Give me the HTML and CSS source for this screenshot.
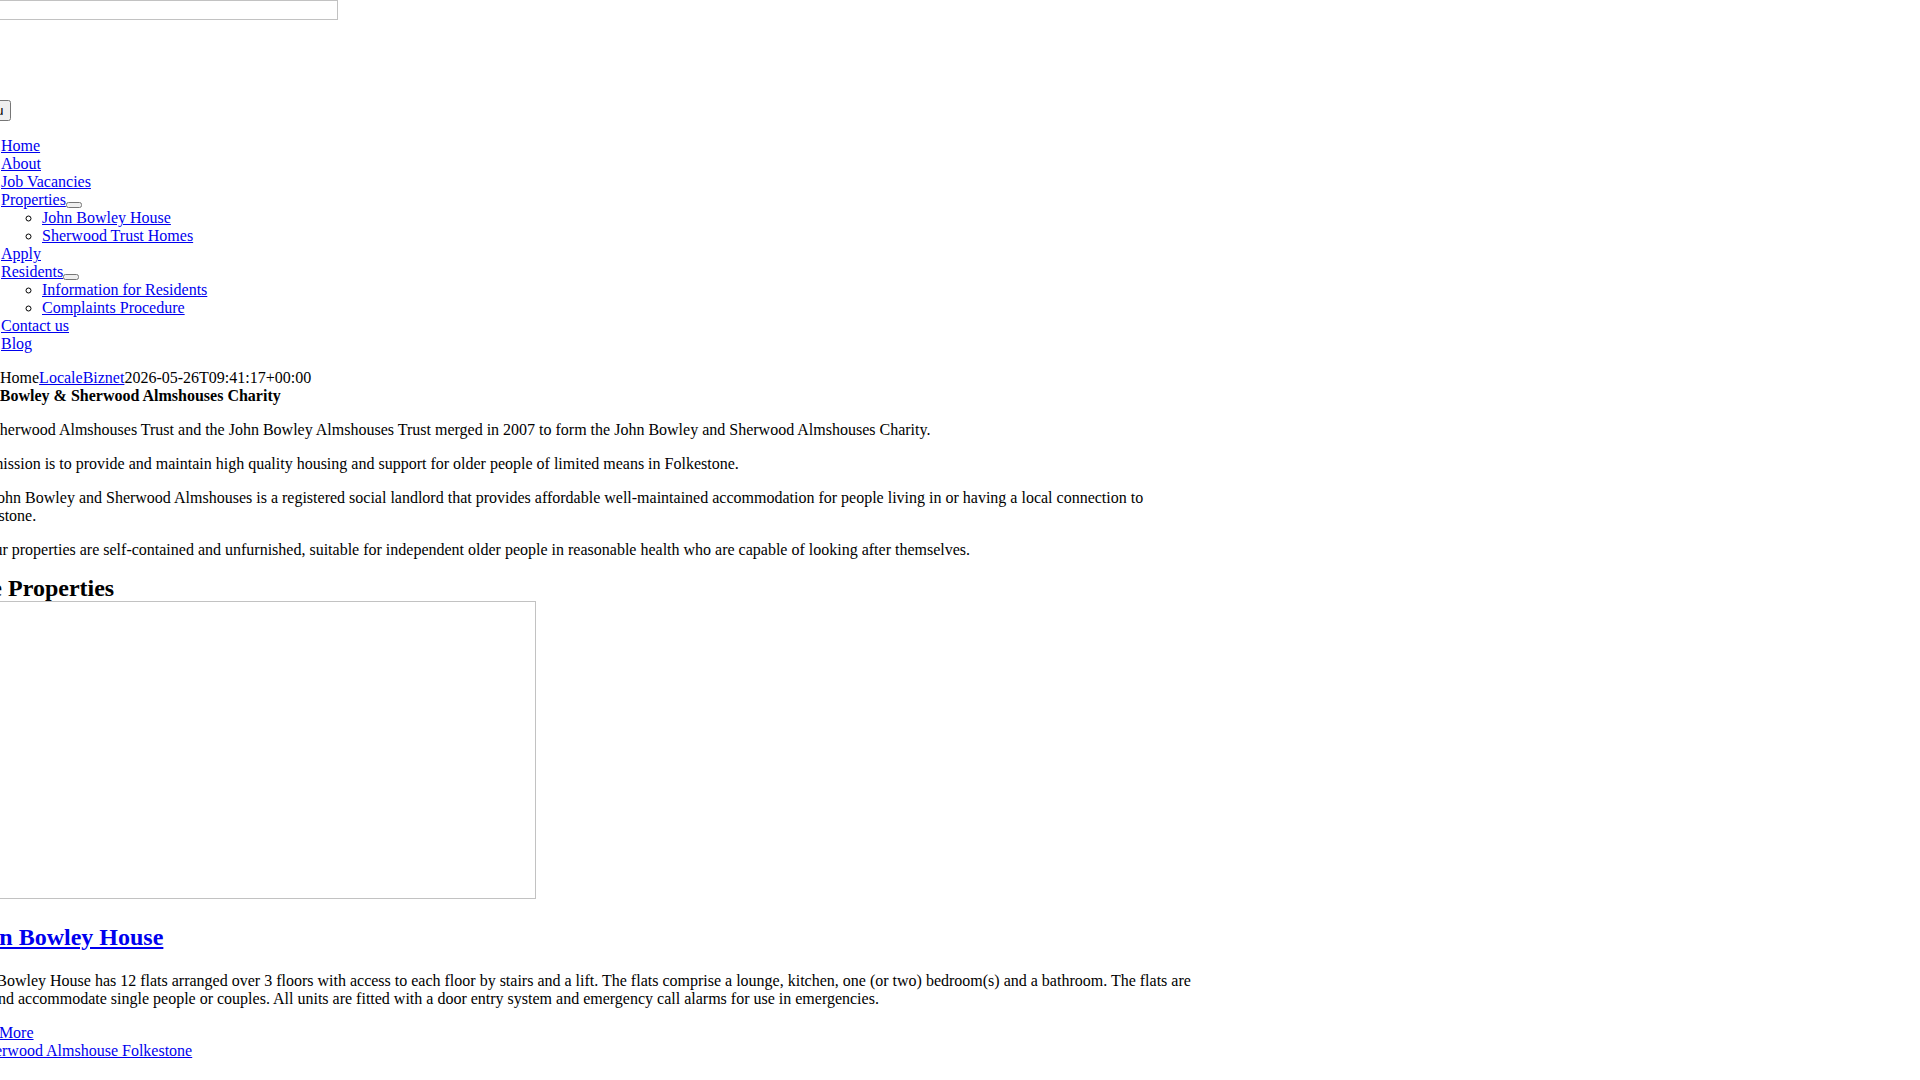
FILE: index.html
```html
<!DOCTYPE html>
<html lang="en">
<head>
<meta charset="utf-8">
<title>John Bowley &amp; Sherwood Almshouses Charity</title>
<link rel="stylesheet" href="styles.css">
</head>
<body>
<header class="site-header">
  <form class="search-form"><input class="search-field" type="text" aria-label="Search"></form>
  <button class="menu-toggle" type="button">Menu</button>
</header>
<nav class="main-nav">
  <ul class="menu">
    <li><a href="#">Home</a></li>
    <li><a href="#">About</a></li>
    <li><a href="#">Job Vacancies</a></li>
    <li><a href="#">Properties</a><button class="sub-toggle" type="button"></button>
      <ul class="sub-menu">
        <li><a href="#">John Bowley House</a></li>
        <li><a href="#">Sherwood Trust Homes</a></li>
      </ul>
    </li>
    <li><a href="#">Apply</a></li>
    <li><a href="#">Residents</a><button class="sub-toggle" type="button"></button>
      <ul class="sub-menu">
        <li><a href="#">Information for Residents</a></li>
        <li><a href="#">Complaints Procedure</a></li>
      </ul>
    </li>
    <li><a href="#">Contact us</a></li>
    <li><a href="#">Blog</a></li>
  </ul>
</nav>
<div class="breadcrumbs">Home<a href="#">LocaleBiznet</a>2026-05-26T09:41:17+00:00</div>
<main class="content">
  <h1 class="page-title">John Bowley &amp; Sherwood Almshouses Charity</h1>
  <p>The Sherwood Almshouses Trust and the John Bowley Almshouses Trust merged in 2007 to form the John Bowley and Sherwood Almshouses Charity.</p>
  <p>Our mission is to provide and maintain high quality housing and support for older people of limited means in Folkestone.</p>
  <p>The John Bowley and Sherwood Almshouses is a registered social landlord that provides affordable well-maintained accommodation for people living in or having a local connection to Folkestone.</p>
  <p>All our properties are self-contained and unfurnished, suitable for independent older people in reasonable health who are capable of looking after themselves.</p>
  <h2 class="section-title">The Properties</h2>
  <div class="map-frame"></div>
  <section class="property">
    <h2 class="property-title"><a href="#">John Bowley House</a></h2>
    <p class="property-text">John Bowley House has 12 flats arranged over 3 floors with access to each floor by stairs and a lift. The flats comprise a lounge, kitchen, one (or two) bedroom(s) and a bathroom. The flats are airy and accommodate single people or couples. All units are fitted with a door entry system and emergency call alarms for use in emergencies.</p>
    <a class="read-more" href="#">Read More</a>
    <a class="next-property" href="#">Sherwood Almshouse Folkestone</a>
  </section>
</main>
</body>
</html>
```

FILE: styles.css
```css
html, body {
  margin: 0;
  padding: 0;
  background: #ffffff;
}

body {
  font-family: "Liberation Serif", "Times New Roman", serif;
  font-size: 16px;
  color: #000000;
  overflow: hidden;
}

a {
  color: #0000ee;
}

.site-header {
  display: flex;
  flex-direction: column;
  align-items: flex-start;
  margin-left: -38px;
}

.search-form {
  margin: 0;
}

.search-field {
  display: block;
  box-sizing: border-box;
  width: 376px;
  height: 20px;
  margin: 0;
  padding: 0 4px;
  border: 1px solid #c2c2c2;
  background: #ffffff;
}

.menu-toggle {
  margin-top: 80px;
}

.main-nav {
  margin-top: 16px;
  margin-left: 1px;
  line-height: 18px;
}

.menu {
  list-style: none;
  margin: 0;
  padding: 0;
}

.sub-menu {
  list-style-type: circle;
  margin: 0;
  padding-left: 41px;
}

.breadcrumbs {
  margin-top: 16px;
}

.content {
  margin-left: -38px;
  width: 1240px;
}

.page-title {
  font-size: 16px;
  font-weight: bold;
  margin: 0;
}

.content p {
  margin: 16px 0;
}

.section-title {
  font-size: 24px;
  font-weight: bold;
  line-height: 25px;
  margin: 17px 0 0;
}

.map-frame {
  box-sizing: border-box;
  width: 574px;
  height: 298px;
  border: 1px solid #c2c2c2;
}

.property-title {
  font-size: 24px;
  font-weight: bold;
  margin: 24.5px 0 21.25px;
}

.content .property-text {
  margin: 0 0 16px;
}

.read-more {
  display: block;
  width: max-content;
}

.next-property {
  display: block;
  width: max-content;
  margin-left: 16px;
}
```
